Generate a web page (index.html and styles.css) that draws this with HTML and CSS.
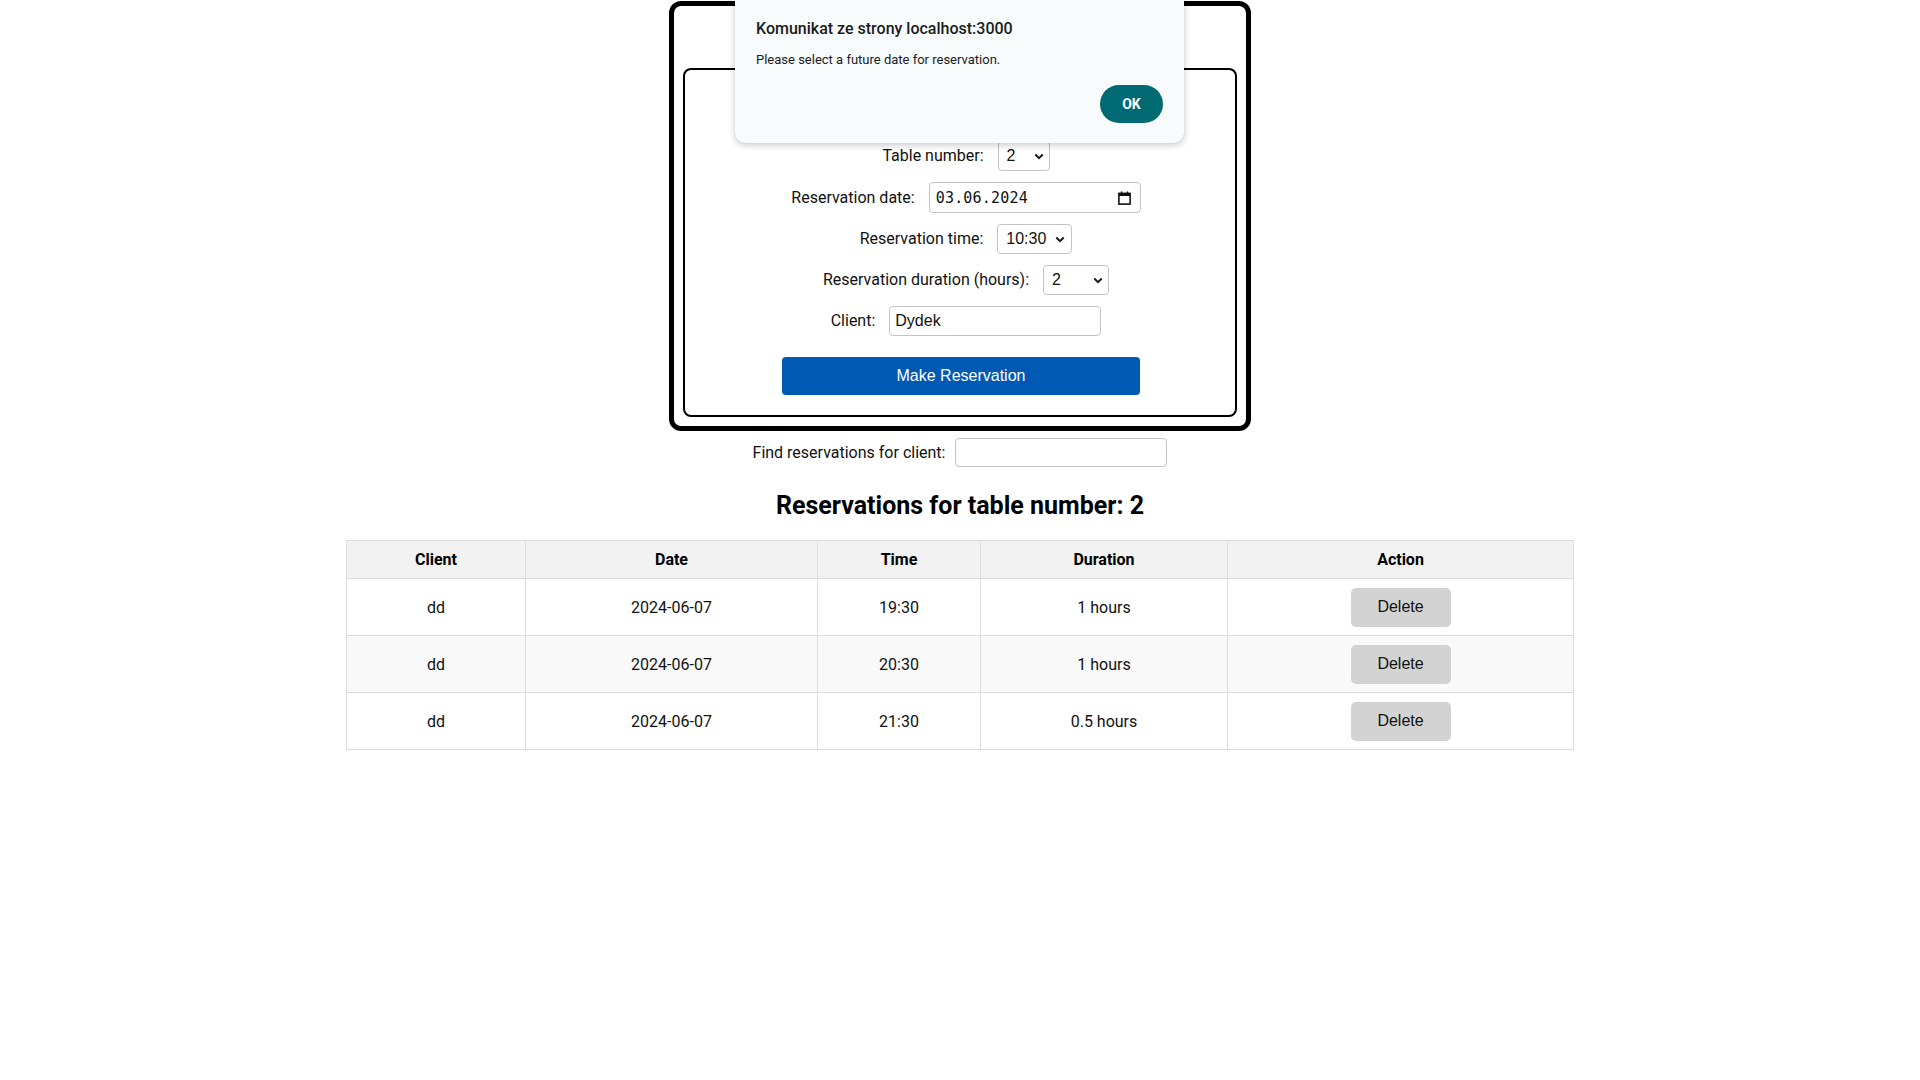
FILE: index.html
```html
<!DOCTYPE html>
<html lang="en">
<head>
<meta charset="utf-8">
<title>Table reservations</title>
<link rel="stylesheet" href="styles.css">
</head>
<body>
<div class="page">
  <div class="panel">
    <div class="form-card">
      <div class="form-row">
        <span class="label">Table number:</span>
        <div class="select select-table"><span>2</span>
          <svg class="chev" width="10" height="7" viewBox="0 0 10 7"><path d="M1.3 1.5 L5 5.2 L8.7 1.5" fill="none" stroke="#1a1a1a" stroke-width="2"/></svg>
        </div>
      </div>
      <div class="form-row">
        <span class="label">Reservation date:</span>
        <div class="field date-field"><span class="date-text">03.06.2024</span>
          <svg class="cal" width="13" height="14" viewBox="0 0 13 14"><rect x="0.9" y="2.4" width="11.2" height="10.7" fill="none" stroke="#111" stroke-width="1.6"/><rect x="0.9" y="2.4" width="11.2" height="2.6" fill="#111"/><rect x="2.8" y="0.5" width="1.6" height="2.5" fill="#111"/><rect x="8.6" y="0.5" width="1.6" height="2.5" fill="#111"/></svg>
        </div>
      </div>
      <div class="form-row">
        <span class="label">Reservation time:</span>
        <div class="select select-time"><span>10:30</span>
          <svg class="chev" width="10" height="7" viewBox="0 0 10 7"><path d="M1.3 1.5 L5 5.2 L8.7 1.5" fill="none" stroke="#1a1a1a" stroke-width="2"/></svg>
        </div>
      </div>
      <div class="form-row">
        <span class="label">Reservation duration (hours):</span>
        <div class="select select-duration"><span>2</span>
          <svg class="chev" width="10" height="7" viewBox="0 0 10 7"><path d="M1.3 1.5 L5 5.2 L8.7 1.5" fill="none" stroke="#1a1a1a" stroke-width="2"/></svg>
        </div>
      </div>
      <div class="form-row">
        <span class="label">Client:</span>
        <input class="field text-field" type="text" value="Dydek">
      </div>
      <button class="submit" type="button">Make Reservation</button>
    </div>
  </div>

  <div class="search-row">
    <span class="label">Find reservations for client:</span>
    <input class="field search-field" type="text" value="">
  </div>

  <h2 class="list-title">Reservations for table number: 2</h2>

  <table class="res-table">
    <colgroup>
      <col class="c-client"><col class="c-date"><col class="c-time"><col class="c-dur"><col class="c-action">
    </colgroup>
    <thead>
      <tr><th>Client</th><th>Date</th><th>Time</th><th>Duration</th><th>Action</th></tr>
    </thead>
    <tbody>
      <tr><td>dd</td><td>2024-06-07</td><td>19:30</td><td>1 hours</td><td><button class="del" type="button">Delete</button></td></tr>
      <tr><td>dd</td><td>2024-06-07</td><td>20:30</td><td>1 hours</td><td><button class="del" type="button">Delete</button></td></tr>
      <tr><td>dd</td><td>2024-06-07</td><td>21:30</td><td>0.5 hours</td><td><button class="del" type="button">Delete</button></td></tr>
    </tbody>
  </table>
</div>

<div class="dialog">
  <div class="dialog-title">Komunikat ze strony localhost:3000</div>
  <div class="dialog-msg">Please select a future date for reservation.</div>
  <div class="dialog-actions"><button class="ok" type="button">OK</button></div>
</div>
</body>
</html>
```

FILE: styles.css
```css
html, body {
  margin: 0;
  padding: 0;
  background: #ffffff;
}

body {
  font-family: Roboto, "Noto Sans", sans-serif;
  font-size: 16px;
  color: #111;
}

.page {
  padding-top: 1px;
  display: flex;
  flex-direction: column;
  align-items: center;
}

.panel {
  width: 582px;
  box-sizing: border-box;
  border: 5px solid #000;
  border-radius: 12px;
  padding: 62px 9px 9px 9px;
}

.form-card {
  box-sizing: border-box;
  border: 2px solid #000;
  border-radius: 8px;
  padding: 71px 0 20px 0;
  display: flex;
  flex-direction: column;
  align-items: center;
  gap: 11px;
}

.form-row {
  display: flex;
  align-items: center;
  justify-content: center;
  gap: 14px;
  padding-left: 12px;
}

.label {
  font-family: Roboto, "Noto Sans", sans-serif;
  font-size: 16px;
  color: #111;
  line-height: 20px;
}

.select {
  box-sizing: border-box;
  height: 30px;
  border: 1px solid #c4c4c4;
  border-radius: 4px;
  display: flex;
  align-items: center;
  justify-content: space-between;
  padding: 0 5px 0 8px;
  font-family: "Liberation Sans", Arial, sans-serif;
  font-size: 16px;
  color: #111;
  background: #fff;
}

.select-table { width: 52px; }
.select-time { width: 75px; padding-right: 6px; }
.select-duration { width: 66px; padding-right: 5px; }

.chev { display: block; }

.field {
  box-sizing: border-box;
  border: 1px solid #c4c4c4;
  border-radius: 4px;
  background: #fff;
  margin: 0;
}

.date-field {
  width: 212px;
  height: 31px;
  display: flex;
  align-items: center;
  justify-content: space-between;
  padding: 0 9px 0 6px;
}

.date-text {
  font-family: "DejaVu Sans Mono", "Liberation Mono", monospace;
  font-size: 15px;
  color: #111;
  letter-spacing: 0.2px;
}

.cal { display: block; }

.text-field {
  width: 212px;
  height: 30px;
  padding: 0 5px;
  font-family: "Liberation Sans", Arial, sans-serif;
  font-size: 16px;
  color: #111;
  outline: none;
}

.submit {
  margin-top: 10px;
  margin-left: 2px;
  width: 358px;
  height: 38px;
  border: none;
  border-radius: 4px;
  background: #0059b3;
  color: #fff;
  font-family: "Liberation Sans", Arial, sans-serif;
  font-size: 16px;
  cursor: pointer;
}

.search-row {
  margin-top: 7px;
  display: flex;
  align-items: center;
  gap: 10px;
}

.search-field {
  width: 212px;
  height: 29px;
  padding: 0 5px;
  font-family: "Liberation Sans", Arial, sans-serif;
  font-size: 16px;
  outline: none;
}

.list-title {
  margin: 25px 0 20px 0;
  font-family: Roboto, "Noto Sans", sans-serif;
  font-weight: 700;
  font-size: 25px;
  line-height: 28px;
  color: #000;
}

.res-table {
  width: 1227px;
  border-collapse: collapse;
  table-layout: fixed;
  font-family: Roboto, "Noto Sans", sans-serif;
  font-size: 16px;
  color: #111;
}

.c-client { width: 179px; }
.c-date { width: 292px; }
.c-time { width: 163px; }
.c-dur { width: 247px; }
.c-action { width: 346px; }

.res-table th,
.res-table td {
  border: 1px solid #dddddd;
  text-align: center;
  vertical-align: middle;
  padding: 0 8px;
}

.res-table th {
  height: 37px;
  background: #f2f2f2;
  font-weight: 700;
  color: #000;
}

.res-table td {
  height: 56px;
}

.res-table tbody tr:nth-child(even) td {
  background: #f9f9f9;
}

.del {
  width: 100px;
  height: 39px;
  border: none;
  border-radius: 5px;
  background: #d3d3d3;
  color: #111;
  font-family: "Liberation Sans", Arial, sans-serif;
  font-size: 16px;
  cursor: pointer;
  vertical-align: middle;
}

.dialog {
  position: absolute;
  top: 0;
  left: calc(50% - 225px);
  width: 449px;
  height: 143px;
  box-sizing: border-box;
  padding: 19px 21px 0 21px;
  background: #f7fbfc;
  border-radius: 0 0 10px 10px;
  box-shadow: 0 2px 7px rgba(0, 0, 0, 0.22), 0 0 1px rgba(0, 0, 0, 0.15);
  display: flex;
  flex-direction: column;
}

.dialog-title {
  font-family: Roboto, "Noto Sans", sans-serif;
  font-weight: 500;
  font-size: 16px;
  line-height: 20px;
  color: #1b1b1b;
}

.dialog-msg {
  margin-top: 13px;
  font-family: Roboto, "Noto Sans", sans-serif;
  font-size: 13px;
  line-height: 16px;
  color: #1b1b1b;
}

.dialog-actions {
  margin-top: 17px;
  display: flex;
  justify-content: flex-end;
}

.ok {
  width: 63px;
  height: 38px;
  border: none;
  border-radius: 19px;
  background: #006a72;
  color: #fff;
  font-family: Roboto, "Noto Sans", sans-serif;
  font-weight: 700;
  font-size: 14px;
  cursor: pointer;
}
```
